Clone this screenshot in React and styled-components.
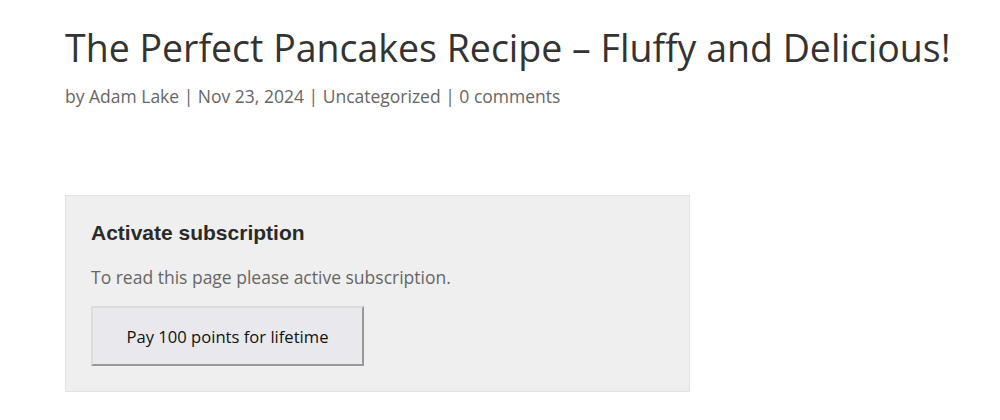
import React from "react";
import styled, { createGlobalStyle } from "styled-components";

const Global = createGlobalStyle`
  html, body { margin: 0; padding: 0; background: #fff; }
  body { font-family: "Open Sans", sans-serif; }
`;

const Page = styled.div`
  padding: 22px 0 0 65px;
  width: 935px;
  box-sizing: border-box;
`;

const Title = styled.h1`
  margin: 0;
  font-family: "Open Sans", sans-serif;
  font-weight: 400;
  font-size: 37.5px;
  line-height: 52px;
  color: #333;
  white-space: nowrap;
`;

const Meta = styled.p`
  margin: 10px 0 0;
  font-size: 17.5px;
  line-height: 24px;
  color: #666;
`;

const Box = styled.section`
  margin-top: 87px;
  width: 625px;
  height: 197px;
  box-sizing: border-box;
  background: #efefef;
  border: 1px solid #e2e2e2;
  padding: 23px 25px;
`;

const BoxTitle = styled.h3`
  margin: 0;
  font-family: "Liberation Sans", Arial, sans-serif;
  font-weight: 700;
  font-size: 21px;
  line-height: 27px;
  color: #2a2a2a;
`;

const Text = styled.p`
  margin: 19px 0 0;
  font-size: 17.5px;
  line-height: 24px;
  color: #666;
`;

const Button = styled.button`
  margin-top: 17px;
  width: 273px;
  height: 60px;
  background: #e9e9ed;
  border-style: solid;
  border-width: 2px;
  border-color: #dcdcdc #999 #999 #dcdcdc;
  font-family: "Open Sans", sans-serif;
  font-size: 16.6px;
  color: #111;
  cursor: pointer;
`;

export default function App() {
  return (
    <>
      <Global />
      <Page>
        <Title>The Perfect Pancakes Recipe – Fluffy and Delicious!</Title>
        <Meta>by Adam Lake | Nov 23, 2024 | Uncategorized | 0 comments</Meta>
        <Box>
          <BoxTitle>Activate subscription</BoxTitle>
          <Text>To read this page please active subscription.</Text>
          <Button>Pay 100 points for lifetime</Button>
        </Box>
      </Page>
    </>
  );
}
